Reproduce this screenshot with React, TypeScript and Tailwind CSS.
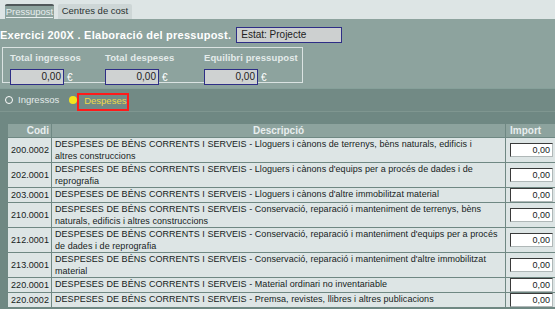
import React from "react";

const P = "DESPESES DE BÉNS CORRENTS I SERVEIS - ";
const rows: { code: string; lines: string[] }[] = [
  { code: "200.0002", lines: [P + "Lloguers i cànons de terrenys, bèns naturals, edificis i", "altres construccions"] },
  { code: "202.0001", lines: [P + "Lloguers i cànons d'equips per a procés de dades i de", "reprografia"] },
  { code: "203.0001", lines: [P + "Lloguers i cànons d'altre immobilitzat material"] },
  { code: "210.0001", lines: [P + "Conservació, reparació i manteniment de terrenys, bèns", "naturals, edificis i altres construccions"] },
  { code: "212.0001", lines: [P + "Conservació, reparació i manteniment d'equips per a procés", "de dades i de reprografia"] },
  { code: "213.0001", lines: [P + "Conservació, reparació i manteniment d'altre immobilitzat", "material"] },
  { code: "220.0001", lines: [P + "Material ordinari no inventariable"] },
  { code: "220.0002", lines: [P + "Premsa, revistes, llibres i altres publicacions"] },
];

function Total({ label, w }: { label: string; w: string }) {
  return (
    <div className={`flex flex-col ${w}`}>
      <div className="text-[9.5px] leading-[12px] font-bold text-[#e4ebea] h-[12px] tracking-[0.1px]">{label}</div>
      <div className="flex items-center mt-[5px]">
        <div className="w-[54px] h-[16px] bg-[#cfd2d2] border border-[#2e2e86] text-[10px] leading-[14px] text-right pr-[2px] text-[#222]">0,00</div>
        <span className="text-[10px] text-white ml-[3px]">€</span>
      </div>
    </div>
  );
}

export default function App() {
  return (
    <div className="w-[555px] h-[309px] overflow-hidden bg-[#6f8883] font-['Liberation_Sans',Arial,sans-serif]">
      {/* Tabs */}
      <div className="h-[19px] bg-[#dde5e5] flex items-end pl-[5px] gap-[4px]">
        <div className="h-[15px] w-[49px] border-t-2 border-[#50585a] rounded-t-[2px] bg-[#8da39e] flex justify-center">
          <span className="text-[9.5px] leading-[11px] text-[#e8eeee] border-b border-[#e8eeee] h-[12px]">Pressupost</span>
        </div>
        <div className="h-[15px] w-[74px] bg-[#cdd6d6] rounded-t-[2px] flex justify-center">
          <span className="text-[9.5px] leading-[14px] text-[#2a3333]">Centres de cost</span>
        </div>
      </div>

      {/* Header panel */}
      <div className="bg-[#8da39e] h-[69px] pt-[8px]">
        <div className="flex items-center h-[16px]">
          <span className="text-[11px] font-bold text-white leading-[16px] tracking-[0.25px]">Exercici 200X . Elaboració del pressupost.</span>
          <div className="ml-[5px] w-[106px] h-[16px] bg-[#cdd0d0] border border-[#2e2e86] text-[10px] leading-[14px] pl-[4px] text-[#222]">Estat: Projecte</div>
        </div>
        <div className="mt-[4px] ml-[2px] w-[301px] h-[36px] border border-[#dbe3e2] flex pl-[7px] pt-[4px]">
          <Total label="Total ingressos" w="w-[95px]" />
          <Total label="Total despeses" w="w-[99px]" />
          <Total label="Equilibri pressupost" w="w-[95px]" />
        </div>
      </div>

      {/* Radio row */}
      <div className="h-[23px] bg-[#728a85] flex items-center border-t border-[#86a09a]">
        <span className="ml-[5px] w-[8px] h-[8px] rounded-full border border-white" />
        <span className="ml-[5px] text-[9.5px] text-[#e4ebea]">Ingressos</span>
        <span className="ml-[10px] w-[8px] h-[8px] rounded-full bg-[#f2e41e]" />
        <span className="mt-[3px] h-[18px] w-[52px] border-2 border-[#ff1a1a] flex items-center pl-[5px] text-[9.5px] text-[#ecd84a]">Despeses</span>
      </div>
      <div className="h-[1px] bg-[#7f9690]" />

      {/* Table */}
      <div className="pt-[12px] pl-[8px]">
        <div className="grid grid-cols-[43px_453px_60px] gap-[1px] text-[9px] leading-[12px] text-[#161c1c] tracking-[0.05px]">
          <div className="bg-[#8da39e] h-[13px] text-right pr-[2px] font-bold text-[10px] leading-[13px] text-[#e8eeee] tracking-normal">Codi</div>
          <div className="bg-[#8da39e] h-[13px] text-center font-bold text-[10px] leading-[13px] text-[#e8eeee] tracking-normal">Descripció</div>
          <div className="bg-[#8da39e] h-[13px] pl-[4px] font-bold text-[10px] leading-[13px] text-[#e8eeee] tracking-normal">Import</div>
          {rows.map((r) => (
            <React.Fragment key={r.code}>
              <div className="bg-[#dde5e5] flex items-center justify-end pr-[2px]">{r.code}</div>
              <div className="bg-[#dde5e5] px-[3px] flex flex-col whitespace-nowrap overflow-hidden">
                {r.lines.map((l) => (
                  <span key={l}>{l}</span>
                ))}
              </div>
              <div className="bg-[#dde5e5] flex items-center pl-[4px]">
                <div className="w-[43px] h-[14px] bg-white border border-t-[#3a3a3a] border-l-[#3a3a3a] border-r-[#b0b8b8] border-b-[#b0b8b8] text-right pr-[2px] leading-[12px] tracking-normal">0,00</div>
              </div>
            </React.Fragment>
          ))}
        </div>
      </div>
    </div>
  );
}
